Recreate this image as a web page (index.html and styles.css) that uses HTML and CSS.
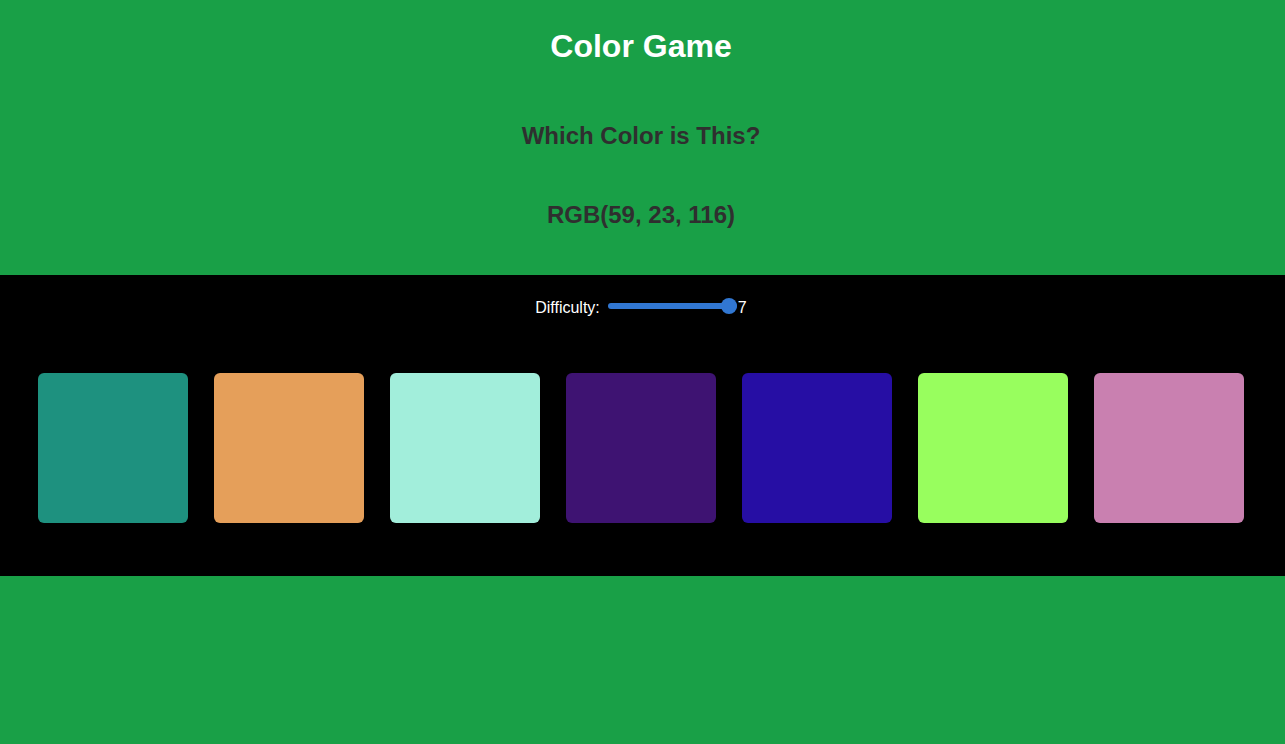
FILE: index.html
```html
<!DOCTYPE html>
<html lang="en">
<head>
<meta charset="utf-8">
<title>Color Game</title>
<link rel="stylesheet" href="styles.css">
</head>
<body>
<header class="header">
  <h1 class="title">Color Game</h1>
  <h2 class="subtitle">Which Color is This?</h2>
  <h2 class="rgb">RGB(59, 23, 116)</h2>
</header>
<main class="board">
  <div class="controls">
    <label class="label" for="difficulty">Difficulty:</label>
    <input class="slider" id="difficulty" type="range" min="1" max="7" value="7">
    <span class="value">7</span>
  </div>
  <div class="squares">
    <div class="square sq1"></div>
    <div class="square sq2"></div>
    <div class="square sq3"></div>
    <div class="square sq4"></div>
    <div class="square sq5"></div>
    <div class="square sq6"></div>
    <div class="square sq7"></div>
  </div>
</main>
</body>
</html>
```
FILE: styles.css
```css
* { box-sizing: border-box; }
html, body {
  margin: 0;
  padding: 0;
  background: #19a047;
  font-family: "Liberation Sans", Arial, sans-serif;
}
.header {
  display: flex;
  flex-direction: column;
  align-items: center;
  padding: 28px 3px 46px 0;
  height: 275px;
}
.title {
  margin: 0;
  font-size: 32px;
  line-height: 37px;
  font-weight: bold;
  color: #ffffff;
}
.subtitle, .rgb {
  margin: 57px 0 0;
  font-size: 24px;
  line-height: 28px;
  font-weight: bold;
  color: #2f2f2f;
}
.rgb { margin-top: 51px; }
.board {
  background: #000000;
  height: 301px;
  padding-top: 24px;
}
.controls {
  display: flex;
  align-items: center;
  justify-content: center;
  color: #ffffff;
  font-size: 16px;
  line-height: 18px;
  height: 18px;
  padding-right: 3px;
}
.label { margin-right: 8px; }
.slider {
  -webkit-appearance: none;
  appearance: none;
  width: 129px;
  height: 16px;
  margin: 0 1px 0 0;
  background: transparent;
  position: relative;
  top: -2px;
}
.slider::-webkit-slider-runnable-track {
  height: 6px;
  border-radius: 3px;
  background: #3177d2;
}
.slider::-webkit-slider-thumb {
  -webkit-appearance: none;
  appearance: none;
  width: 16px;
  height: 16px;
  border-radius: 50%;
  background: #3177d2;
  margin-top: -5px;
}
.value { width: 9px; }
.squares {
  display: flex;
  gap: 26px;
  padding-left: 38px;
  margin-top: 56px;
}
.square {
  width: 150px;
  height: 150px;
  border-radius: 6px;
}
.sq1 { background: #1e917f; }
.sq2 { background: #e59f5a; }
.sq3 { background: #a2eedb; }
.sq4 { background: #3e1372; }
.sq5 { background: #260ea4; }
.sq6 { background: #98fe5e; }
.sq7 { background: #c980b0; }
```
